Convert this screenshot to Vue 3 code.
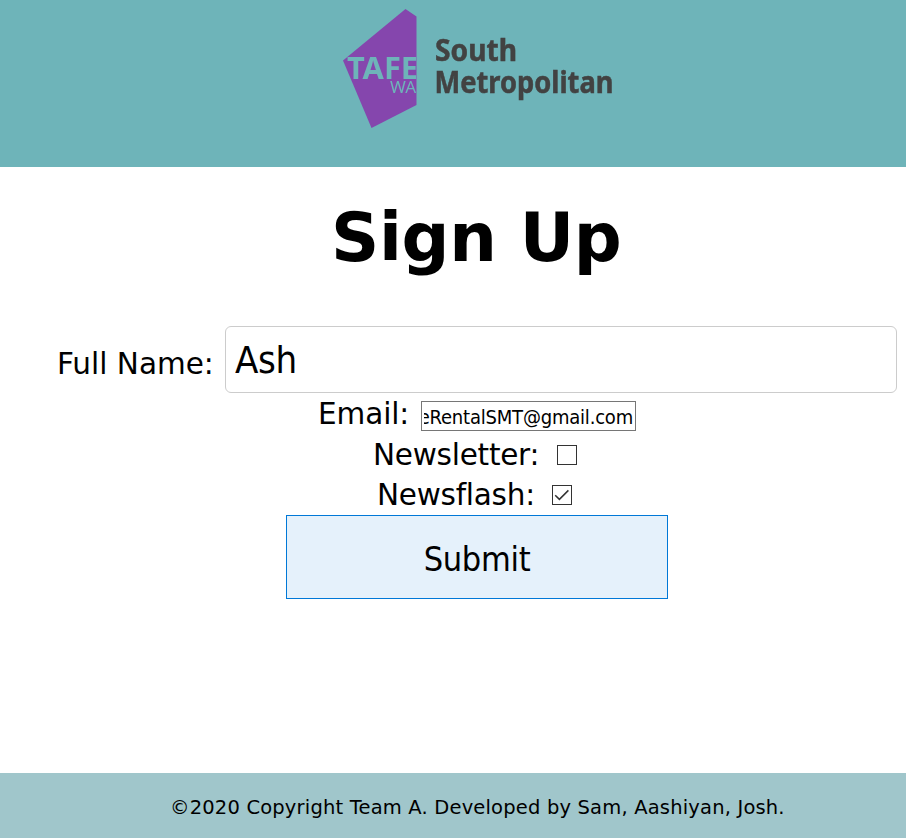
<script setup>
import { ref } from 'vue'

const fullName = ref('Ash')
const email = ref('eRentalSMT@gmail.com')
const newsletter = ref(false)
const newsflash = ref(true)
</script>

<template>
  <div class="page">
    <header class="header">
      <svg class="logo" width="280" height="130" viewBox="340 0 280 130" role="img" aria-label="TAFE WA South Metropolitan">
        <polygon points="405.5,9 416.5,16.5 416.5,105 371.5,128 343,60.5" fill="#8546ad" />
        <text class="tafe" x="347" y="79" textLength="71" lengthAdjust="spacingAndGlyphs">TAFE</text>
        <text class="wa" x="390" y="93" textLength="26" lengthAdjust="spacingAndGlyphs">WA</text>
        <text class="campus" x="435" y="60.5" textLength="82" lengthAdjust="spacingAndGlyphs">South</text>
        <text class="campus" x="434.5" y="93.3" textLength="179" lengthAdjust="spacingAndGlyphs">Metropolitan</text>
      </svg>
    </header>

    <main class="main">
      <h1 class="title">Sign Up</h1>
      <form class="form" @submit.prevent>
        <label class="row name-row">
          <span class="label name-label">Full Name:</span>
          <input v-model="fullName" class="name-input" type="text" />
        </label>
        <label class="row email-row">
          <span class="label email-label">Email:</span>
          <span class="email-box"><span class="email-value">{{ email }}</span></span>
        </label>
        <label class="row letter-row">
          <span class="label letter-label">Newsletter:</span>
          <input v-model="newsletter" class="sr" type="checkbox" />
          <svg class="check" width="20" height="20" viewBox="0 0 20 20">
            <rect x=".5" y=".5" width="19" height="19" fill="#fff" stroke="#333" />
            <path v-if="newsletter" d="M3.2 10.2 7.4 14.4 16.4 5.4" fill="none" stroke="#333" stroke-width="1.5" />
          </svg>
        </label>
        <label class="row flash-row">
          <span class="label flash-label">Newsflash:</span>
          <input v-model="newsflash" class="sr" type="checkbox" />
          <svg class="check" width="20" height="20" viewBox="0 0 20 20">
            <rect x=".5" y=".5" width="19" height="19" fill="#fff" stroke="#333" />
            <path v-if="newsflash" d="M3.2 10.2 7.4 14.4 16.4 5.4" fill="none" stroke="#333" stroke-width="1.5" />
          </svg>
        </label>
        <button class="submit" type="submit"><span>Submit</span></button>
      </form>
    </main>

    <footer class="footer"><span>©2020 Copyright Team A. Developed by Sam, Aashiyan, Josh.</span></footer>
  </div>
</template>

<style>
body {
  margin: 0;
  background: #fff;
}
</style>

<style scoped>
.page {
  display: flex;
  flex-direction: column;
  width: 906px;
  height: 838px;
  overflow: hidden;
  color: #000;
  font-family: Verdana, "DejaVu Sans", sans-serif;
  font-variant-ligatures: none;
}
.header {
  box-sizing: border-box;
  height: 167px;
  padding-left: 340px;
  background: #6eb4b9;
}
.logo {
  display: block;
  filter: blur(0.5px);
}
.tafe,
.wa,
.campus {
  font-family: "Noto Sans", sans-serif;
}
.tafe {
  font-size: 31px;
  font-weight: 700;
  fill: #6eb4b9;
}
.wa {
  font-size: 17px;
  fill: #6eb4b9;
}
.campus {
  font-size: 30px;
  font-weight: 700;
  fill: #424242;
  stroke: #424242;
  stroke-width: 0.5px;
}
.main {
  flex: 1;
}
.title {
  height: 80px;
  margin: 31px 0 48px;
  padding-left: 331px;
  font-size: 67px;
  font-weight: 700;
  line-height: 80px;
  letter-spacing: -0.3px;
  white-space: nowrap;
}
.row {
  display: flex;
  align-items: flex-start;
}
.label {
  flex: none;
  font-size: 29.5px;
  line-height: 36px;
  letter-spacing: -0.25px;
  white-space: nowrap;
}
.name-row {
  height: 67px;
  padding-left: 57px;
}
.name-label {
  width: 168px;
  padding-top: 20px;
  letter-spacing: 0;
}
.name-input {
  box-sizing: border-box;
  width: 672px;
  height: 67px;
  padding: 0 9px;
  border: 1px solid #ccc;
  border-radius: 6px;
  outline: none;
  color: #000;
  background: #fff;
  font-family: "DejaVu Sans", sans-serif;
  font-stretch: condensed;
  font-size: 38px;
  letter-spacing: -0.4px;
}
.email-row {
  box-sizing: border-box;
  height: 45px;
  padding: 3px 0 0 318px;
}
.email-label {
  width: 103px;
  letter-spacing: -0.1px;
}
.email-box {
  display: flex;
  justify-content: flex-end;
  align-items: center;
  box-sizing: border-box;
  width: 215px;
  height: 30px;
  margin-top: 5px;
  padding: 1px 2px 0;
  border: 1px solid #767676;
}
.email-value {
  display: flex;
  justify-content: flex-end;
  width: 209px;
  overflow: hidden;
  font-family: "DejaVu Sans", sans-serif;
  font-stretch: condensed;
  font-size: 20px;
  line-height: 26px;
  letter-spacing: -0.2px;
}
.letter-row {
  height: 40px;
  padding-left: 373px;
}
.letter-label {
  width: 184px;
  margin-top: -1px;
}
.flash-row {
  height: 37px;
  padding-left: 377px;
}
.flash-label {
  width: 175px;
  margin-top: -1px;
}
.check {
  flex: none;
  margin-top: 7px;
}
.sr {
  display: none;
}
.submit {
  display: block;
  box-sizing: border-box;
  width: 382px;
  height: 84px;
  margin: 0 0 0 286px;
  padding: 4px 0 0;
  border: 1px solid #0078d7;
  color: #000;
  background: #e5f1fb;
  font-family: "DejaVu Sans", sans-serif;
  font-stretch: condensed;
  font-size: 34px;
  letter-spacing: -0.3px;
}
.footer {
  box-sizing: border-box;
  height: 65px;
  padding-left: 170px;
  background: #a0c6cb;
  font-size: 19.5px;
  line-height: 70px;
  letter-spacing: 0.18px;
  white-space: nowrap;
}
</style>
